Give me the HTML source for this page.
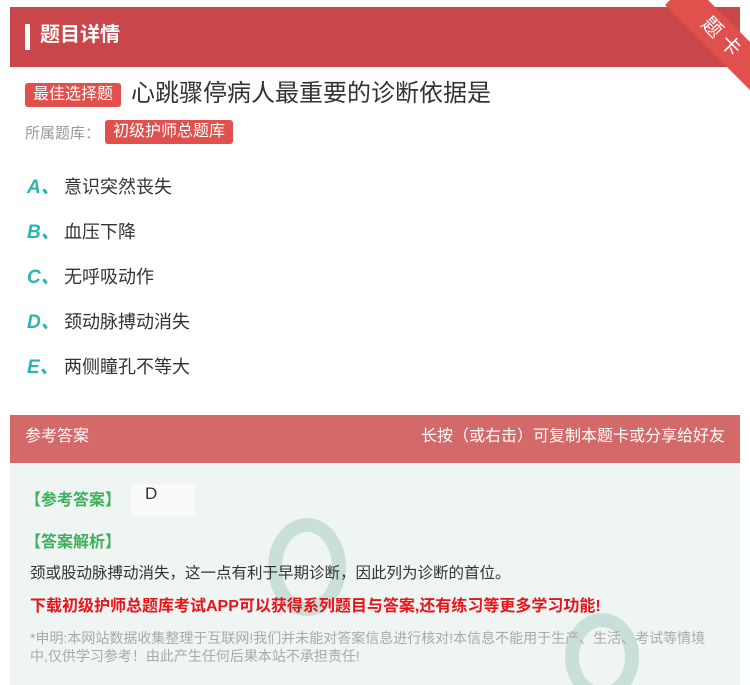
<!DOCTYPE html>
<html><head><meta charset="utf-8"><style>
html,body{margin:0;width:750px;height:685px;overflow:hidden}
body{background:#fff;font-family:"Liberation Sans","Noto Sans CJK SC",sans-serif;position:relative}
.hd{position:absolute;left:10px;top:7px;width:730px;height:60px;background:#c9474a}
.hd .bar{position:absolute;left:15px;top:17px;width:5px;height:26px;background:#fff}
.hd .t{position:absolute;left:30px;top:13px;color:#fff;font-size:20px;font-weight:bold;line-height:30px}
.rib{position:absolute;width:130px;height:34px;background:#e0504d;transform:rotate(45deg);color:#fff;font-size:20px;text-align:center;line-height:34px;right:-38px;top:22px;letter-spacing:6px}
.tag{position:absolute;background:#e0504d;color:#fff;border-radius:3px;padding:0 8px;font-size:16px;line-height:24px}
.q{position:absolute;left:131px;top:79px;font-size:24px;color:#333;line-height:30px}
.lib{position:absolute;left:25px;top:122px;font-size:15px;color:#999}
.op{position:absolute;left:27px;font-size:18px;color:#333;line-height:24px}
.op b{color:#2bb5b0;font-style:italic;font-size:19px;display:inline-block;width:37px}
.ah{position:absolute;left:10px;top:415px;width:730px;height:48px;background:#d4696a;color:#fff;font-size:16px;line-height:44px}
.ab{position:absolute;left:10px;top:463px;width:730px;height:222px;background:#eef5f3;overflow:hidden}
.g{position:absolute;color:#3cb05a;font-weight:bold;font-size:16px}
</style></head><body>
<div class="hd"><div class="bar"></div><div class="t">题目详情</div></div>
<div class="rib">题卡</div>
<div class="tag" style="left:25px;top:83px">最佳选择题</div>
<div class="q">心跳骤停病人最重要的诊断依据是</div>
<div class="lib">所属题库：</div>
<div class="tag" style="left:105px;top:120px">初级护师总题库</div>
<div class="op" style="top:175px"><b>A、</b>意识突然丧失</div>
<div class="op" style="top:220px"><b>B、</b>血压下降</div>
<div class="op" style="top:265px"><b>C、</b>无呼吸动作</div>
<div class="op" style="top:310px"><b>D、</b>颈动脉搏动消失</div>
<div class="op" style="top:355px"><b>E、</b>两侧瞳孔不等大</div>
<div class="ah"><span style="position:absolute;left:15px">参考答案</span><span style="position:absolute;right:15px">长按（或右击）可复制本题卡或分享给好友</span></div>
<div class="ab">
<div style="position:absolute;left:258px;top:55px;width:50px;height:70px;border-radius:50%;border:14px solid #b9d6cf;opacity:.7"></div>
<div style="position:absolute;left:555px;top:150px;width:46px;height:60px;border-radius:50%;border:14px solid #b9d6cf;opacity:.7"></div>
</div>
<div class="g" style="left:25px;top:486px">【参考答案】</div>
<div style="position:absolute;left:131px;top:484px;width:64px;height:32px;background:#fafafa;font-size:17px;color:#333;padding-left:14px;box-sizing:border-box">D</div>
<div class="g" style="left:25px;top:528px">【答案解析】</div>
<div style="position:absolute;left:30px;top:561px;font-size:15.5px;color:#333">颈或股动脉搏动消失，这一点有利于早期诊断，因此列为诊断的首位。</div>
<div style="position:absolute;left:30px;top:592px;font-size:16px;color:#e8141a;font-weight:bold;white-space:nowrap">下载初级护师总题库考试APP可以获得系列题目与答案,还有练习等更多学习功能!</div>
<div style="position:absolute;left:30px;top:629px;width:700px;font-size:14px;color:#aaa;line-height:18px;white-space:nowrap">*申明:本网站数据收集整理于互联网!我们并未能对答案信息进行核对!本信息不能用于生产、生活、考试等情境<br>中,仅供学习参考！由此产生任何后果本站不承担责任!</div>
</body></html>
